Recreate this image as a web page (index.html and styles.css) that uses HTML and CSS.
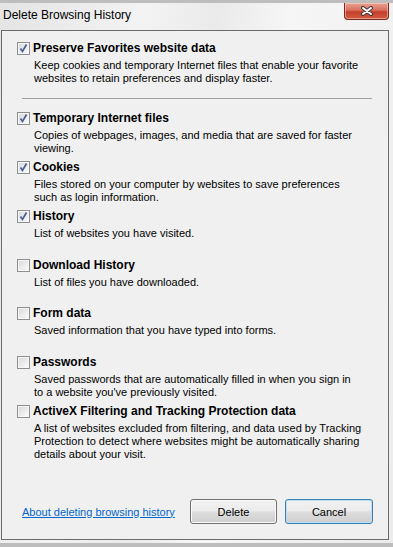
FILE: index.html
```html
<!DOCTYPE html>
<html lang="en">

<head>
    <meta charset="UTF-8">
    <meta name="viewport" content="width=device-width, initial-scale=1.0">
    <title>Delete Browsing History</title>
    <link rel="stylesheet" href="styles.css">
</head>

<body>
    <div class="window">
        <div class="titlebar">
            <span class="title">Delete Browsing History</span>
            <button class="close" title="Close">
                <svg width="14" height="10" viewBox="0 0 14 10">
                    <path d="M3 2 L11 8 M11 2 L3 8" stroke="#3b3b3b" stroke-width="4" stroke-linecap="round" />
                    <path d="M3 2 L11 8 M11 2 L3 8" stroke="#ffffff" stroke-width="2" stroke-linecap="round" />
                </svg>
            </button>
        </div>

        <div class="client">
            <div class="option first">
                <label class="option-head">
                    <span class="box checked"><svg width="11" height="11" viewBox="0 0 11 11"><path d="M2.5 5.5 L4.5 8.5 L8.5 1.5" /></svg></span>
                    <span class="option-name">Preserve Favorites website data</span>
                </label>
                <p class="option-desc">Keep cookies and temporary Internet files that enable your favorite<br>websites to retain preferences and display faster.</p>
            </div>

            <div class="separator"></div>

            <div class="option">
                <label class="option-head">
                    <span class="box checked"><svg width="11" height="11" viewBox="0 0 11 11"><path d="M2.5 5.5 L4.5 8.5 L8.5 1.5" /></svg></span>
                    <span class="option-name">Temporary Internet files</span>
                </label>
                <p class="option-desc">Copies of webpages, images, and media that are saved for faster<br>viewing.</p>
            </div>
            <div class="option">
                <label class="option-head">
                    <span class="box checked"><svg width="11" height="11" viewBox="0 0 11 11"><path d="M2.5 5.5 L4.5 8.5 L8.5 1.5" /></svg></span>
                    <span class="option-name">Cookies</span>
                </label>
                <p class="option-desc">Files stored on your computer by websites to save preferences<br>such as login information.</p>
            </div>
            <div class="option">
                <label class="option-head">
                    <span class="box checked"><svg width="11" height="11" viewBox="0 0 11 11"><path d="M2.5 5.5 L4.5 8.5 L8.5 1.5" /></svg></span>
                    <span class="option-name">History</span>
                </label>
                <p class="option-desc">List of websites you have visited.</p>
            </div>
            <div class="option tall">
                <label class="option-head">
                    <span class="box"></span>
                    <span class="option-name">Download History</span>
                </label>
                <p class="option-desc">List of files you have downloaded.</p>
            </div>
            <div class="option short">
                <label class="option-head">
                    <span class="box"></span>
                    <span class="option-name">Form data</span>
                </label>
                <p class="option-desc">Saved information that you have typed into forms.</p>
            </div>
            <div class="option">
                <label class="option-head">
                    <span class="box"></span>
                    <span class="option-name">Passwords</span>
                </label>
                <p class="option-desc">Saved passwords that are automatically filled in when you sign in<br>to a website you've previously visited.</p>
            </div>
            <div class="option">
                <label class="option-head">
                    <span class="box"></span>
                    <span class="option-name">ActiveX Filtering and Tracking Protection data</span>
                </label>
                <p class="option-desc">A list of websites excluded from filtering, and data used by Tracking<br>Protection to detect where websites might be automatically sharing<br>details about your visit.</p>
            </div>

            <div class="footer">
                <a href="#" class="help-link">About deleting browsing history</a>
                <button class="btn">Delete</button>
                <button class="btn default">Cancel</button>
            </div>
        </div>
    </div>
</body>

</html>
```

FILE: styles.css
```css
body {
    margin: 0;
    width: 393px;
    height: 547px;
    overflow: hidden;
    background-color: #bdbdbd;
    font-family: "Liberation Sans", Arial, sans-serif;
    font-size: 11px;
    color: #000;
}

.window {
    margin-top: 3px;
    height: 540px;
    box-sizing: border-box;
    padding: 0 4px 3px 1px;
    display: flex;
    flex-direction: column;
    background: linear-gradient(100deg, #e4e4e4 0%, #f3f3f3 30%, #eaeaea 45%, #f6f6f6 60%, #ececec 100%);
}

.titlebar {
    height: 27px;
    display: flex;
    justify-content: space-between;
    align-items: flex-start;
}

.title {
    font-size: 12px;
    line-height: 16px;
    margin: 4px 0 0 2px;
}

.close {
    width: 45px;
    height: 17px;
    padding: 0;
    border: 1px solid #7a2a1c;
    border-top: none;
    border-radius: 0 0 4px 4px;
    background: linear-gradient(#e8a393 0%, #d8705e 45%, #c4402b 55%, #d35a44 100%);
    box-shadow: inset 0 0 0 1px rgba(255, 220, 210, 0.5);
    display: flex;
    align-items: center;
    justify-content: center;
}

.client {
    flex: 1;
    border: 1px solid #6b6b6b;
    background-color: #f0f0f0;
    padding-top: 9px;
    display: flex;
    flex-direction: column;
}

.option {
    height: 49px;
    padding-left: 15px;
}

.option.first {
    height: auto;
}

.option.tall {
    height: 48px;
}

.option-head {
    display: flex;
    align-items: center;
    gap: 3px;
    height: 16px;
}

.option-name {
    font-size: 12px;
    font-weight: bold;
    line-height: 16px;
}

.option-desc {
    margin: 3px 0 0 17px;
    line-height: 13px;
    white-space: nowrap;
}

.box {
    width: 13px;
    height: 13px;
    box-sizing: border-box;
    border: 1px solid #8e8f8f;
    background: linear-gradient(135deg, #d6d8db 0%, #eeeeee 60%, #fafafa 100%);
    box-shadow: inset 0 0 0 1px #f6f6f6;
    display: flex;
    align-items: center;
    justify-content: center;
}

.box svg path {
    fill: none;
    stroke: #4a5f97;
    stroke-width: 1.7;
}

.separator {
    height: 1px;
    margin: 13px 16px 11px 20px;
    background-color: #a0a0a0;
}

.footer {
    margin-top: auto;
    padding: 0 15px 15px 20px;
    display: flex;
    align-items: center;
}

.help-link {
    color: #0066cc;
    text-decoration: underline;
    margin-right: auto;
}

.btn {
    width: 87px;
    height: 25px;
    margin-left: 8px;
    font-family: "Liberation Sans", Arial, sans-serif;
    font-size: 11px;
    color: #000;
    border: 1px solid #707070;
    border-radius: 3px;
    background: linear-gradient(#f2f2f2 0%, #ebebeb 48%, #dddddd 52%, #cfcfcf 100%);
    box-shadow: inset 0 0 0 1px #fbfbfb;
}

.btn.default {
    width: 88px;
    border-color: #3c7fb1;
    box-shadow: inset 0 0 0 1px #b7e0f7;
}
```
